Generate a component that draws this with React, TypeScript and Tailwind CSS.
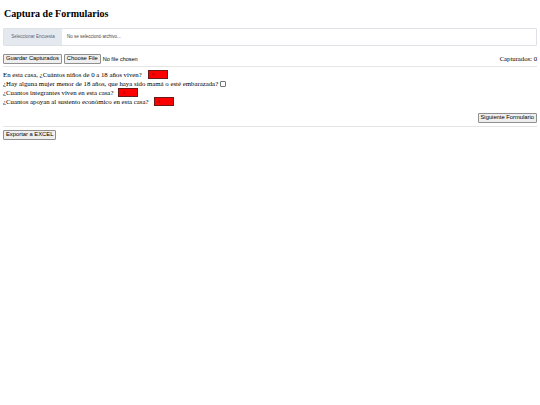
export default function App() {
  const serif = { fontFamily: '"Liberation Serif", "Times New Roman", serif' };
  const sans = { fontFamily: '"Liberation Sans", Arial, sans-serif' };

  const btn =
    'h-[10px] px-[2px] text-[5.8px] leading-none border border-[#8f8f8f] rounded-[1px] bg-[#efefef] text-black';
  const redBox =
    'inline-flex h-[9px] w-[20px] items-center bg-[#ff0000] pl-[3px] text-[5px] text-[#8b0000] border border-[#6b1a1a]';

  return (
    <div className="min-h-screen bg-white px-[3px] text-black" style={serif}>
      <h1 className="pt-[7px] pl-[1px] text-[10px] font-bold leading-[14px]">Captura de Formularios</h1>

      {/* selector de encuesta */}
      <div className="mt-[7px] flex h-[18px] border border-[#dee2e6] rounded-[1px]" style={sans}>
        <div className="flex w-[58px] items-center justify-center bg-[#e4e9f0] text-[4.5px] text-[#5a6270]">
          Seleccionar Encuesta
        </div>
        <div className="flex flex-1 items-center pl-[5px] text-[4.5px] text-[#444]">No se seleccionó archivo...</div>
      </div>

      <div className="mt-[8px] flex h-[10px] items-center gap-[2px]">
        <button className={btn} style={sans}>
          Guardar Capturados
        </button>
        <button className={btn} style={sans}>
          Choose File
        </button>
        <span className="text-[5.5px]" style={sans}>
          No file chosen
        </span>
        <span className="ml-auto text-[6.7px]">Capturados: 0</span>
      </div>
      <hr className="mt-[2px] border-t-[1.5px] border-[#e5e5e5]" />

      <div className="mt-[3px] text-[6.8px] leading-[9px]">
        <div className="flex items-center">
          En esta casa, ¿Cuántos niños de 0 a 18 años viven?
          <span className={`ml-[6px] ${redBox}`}>0</span>
        </div>
        <div className="flex items-center">
          ¿Hay alguna mujer menor de 18 años, que haya sido mamá o esté embarazada?
          <span className="ml-[2px] inline-block h-[6px] w-[6px] border border-[#767676] rounded-[1px] bg-white" />
        </div>
        <div className="flex items-center">
          ¿Cuantos integrantes viven en esta casa?
          <span className={`ml-[5px] ${redBox}`}>0</span>
        </div>
        <div className="flex items-center">
          ¿Cuantos apoyan al sustento económico en esta casa?
          <span className={`ml-[5px] ${redBox}`}>0</span>
        </div>
      </div>

      <div className="mt-[7px] flex justify-end">
        <button className={btn} style={sans}>
          Siguiente Formulario
        </button>
      </div>
      <hr className="mt-[3px] border-t-[1.5px] border-[#e5e5e5]" />
      <div className="mt-[3px] flex">
        <button className={btn} style={sans}>
          Exportar a EXCEL
        </button>
      </div>
    </div>
  );
}
